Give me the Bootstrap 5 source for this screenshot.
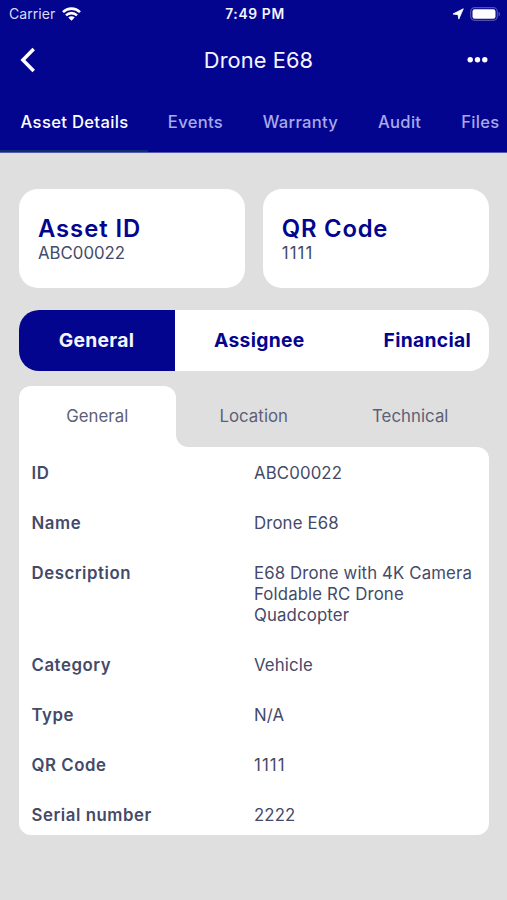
<!DOCTYPE html>
<html lang="en">
<head>
<meta charset="utf-8">
<meta name="viewport" content="width=device-width, initial-scale=1">
<title>Drone E68</title>
<link href="https://cdn.jsdelivr.net/npm/bootstrap@5.3.0/dist/css/bootstrap.min.css" rel="stylesheet">
<style>
body{font-family:Inter,"Liberation Sans",sans-serif;background:#dfdfdf;color:#444a68;min-height:900px;font-size:16.8px;line-height:21px;overflow:hidden}
.app-head{background:#04058f;height:153px;color:#f4f5ff;border-bottom:1px solid #5558b0}
.status{height:27px;padding:0 6px 0 9px;font-size:14px;letter-spacing:.05px;color:#dcdcf6}
.status>div{flex:1 1 0}
.clock{font-weight:600;font-size:13.8px;letter-spacing:.65px;color:#f4f5ff;padding-top:1px}
.title-bar{height:66px;padding:0 18px 0 20px}
.title-bar h1{font-size:21.8px;font-weight:400;letter-spacing:.1px;padding-left:8px}
.main-tabs{height:59px;font-size:16.6px;font-weight:500;letter-spacing:.28px}
.main-tabs a{color:#a6a9ea;padding:0 19.9px 0 20px;line-height:58px;white-space:nowrap;text-decoration:none}
.main-tabs a.active{color:#fff;border-bottom:2px solid #07306c;padding:0 19.4px 0 20.6px;letter-spacing:.33px}
.page{padding:36px 18.5px 0 19px}
.info{border-radius:19px;height:99px;padding:26px 19px 0}
.info h2{font-size:23.8px;line-height:28px;font-weight:600;color:#04058f;letter-spacing:.95px}
.info:nth-child(2) h2{letter-spacing:.8px}
.ones{letter-spacing:1.05px!important}
.segments{height:61px;border-radius:20px;margin-top:22px;font-size:19.3px;font-weight:650;color:#04058f;letter-spacing:.3px}
.seg-on{background:#04058f;color:#f4f5ff;width:156px;padding-right:1px}
.sub-tabs{height:61px;margin-top:15px;font-size:16.8px;letter-spacing:.05px;color:#5b5f78}
.sub-tabs>div{width:156.5px}
.sub-on{border-radius:12px 12px 0 0;background:#fff;position:relative}
.sub-on::after{content:"";position:absolute;left:100%;bottom:0;width:12px;height:12px;background:radial-gradient(circle at 100% 0,transparent 11.5px,#fff 12.3px)}
.panel{border-radius:0 12px 12px 12px;padding:16px 12.5px 9px;gap:29px;height:388px}
.panel dt{width:222.5px;font-weight:600;letter-spacing:.55px}
.panel dd{letter-spacing:.13px;white-space:nowrap}
</style>
</head>
<body>
<header class="app-head">
  <div class="status d-flex align-items-center">
    <div class="d-flex align-items-center gap-1">Carrier
      <svg style="margin-left:3px" width="19" height="14" viewBox="0 0 19 14" fill="none" stroke="#fff" stroke-width="2.6"><path d="M1 5.1a12.2 12.2 0 0 1 17 0M4 8.4a7.9 7.9 0 0 1 11 0"/><path d="M6.3 10.6a4.6 4.6 0 0 1 6.4 0L9.5 13.8z" fill="#fff" stroke="none"/></svg>
    </div>
    <div class="clock text-center">7:49 PM</div>
    <div class="d-flex align-items-center justify-content-end">
      <svg width="12" height="12" viewBox="0 0 12 12" fill="#fff"><path d="M11.3.8 6.8 11.1 6.1 6.7 1 6z" stroke="#fff" stroke-width=".8" stroke-linejoin="round"/></svg>
      <svg style="margin-left:6px" width="31" height="14" viewBox="0 0 31 14"><rect x=".7" y=".7" width="26.6" height="12.6" rx="4" fill="none" stroke="#5052ae" stroke-width="1.2"/><rect x="2.5" y="2.3" width="23" height="9.4" rx="2.2" fill="#fff"/><path d="M28.6 4.7c2 .9 2 3.7 0 4.6z" fill="#5052ae"/></svg>
    </div>
  </div>
  <div class="title-bar d-flex align-items-center justify-content-between">
    <svg width="22" height="26" viewBox="0 0 22 26" fill="none" stroke="#fff" stroke-width="3.5"><path d="M13.7 2 2.9 13l10.8 11"/></svg>
    <h1 class="mb-0">Drone E68</h1>
    <svg width="22" height="8" viewBox="0 0 22 8" fill="#fff"><circle cx="3.2" cy="3.7" r="2.7"/><circle cx="10.5" cy="3.7" r="2.7"/><circle cx="17.8" cy="3.7" r="2.7"/></svg>
  </div>
  <nav class="main-tabs d-flex">
    <a class="active" href="#">Asset Details</a><a href="#">Events</a><a href="#">Warranty</a><a href="#">Audit</a><a href="#">Files</a>
  </nav>
</header>
<main class="page">
  <div class="d-flex" style="gap:18px">
    <section class="info bg-white flex-fill w-50"><h2 class="mb-0">Asset ID</h2><div>ABC00022</div></section>
    <section class="info bg-white flex-fill w-50"><h2 class="mb-0">QR Code</h2><div class="ones">1111</div></section>
  </div>
  <div class="segments bg-white d-flex align-items-center overflow-hidden">
    <div class="seg-on h-100 d-flex align-items-center justify-content-center">General</div>
    <div class="flex-fill d-flex justify-content-between" style="padding:0 17.5px 0 39px"><span>Assignee</span><span>Financial</span></div>
  </div>
  <div class="sub-tabs d-flex text-center align-items-center">
    <div class="sub-on h-100 d-flex align-items-center justify-content-center">General</div><div>Location</div><div>Technical</div>
  </div>
  <dl class="panel bg-white d-flex flex-column mb-0">
    <div class="d-flex"><dt>ID</dt><dd class="mb-0">ABC00022</dd></div>
    <div class="d-flex"><dt>Name</dt><dd class="mb-0">Drone E68</dd></div>
    <div class="d-flex"><dt>Description</dt><dd class="mb-0">E68 Drone with 4K Camera<br>Foldable RC Drone<br>Quadcopter</dd></div>
    <div class="d-flex"><dt>Category</dt><dd class="mb-0">Vehicle</dd></div>
    <div class="d-flex"><dt>Type</dt><dd class="mb-0">N/A</dd></div>
    <div class="d-flex"><dt>QR Code</dt><dd class="mb-0 ones">1111</dd></div>
    <div class="d-flex"><dt>Serial number</dt><dd class="mb-0">2222</dd></div>
  </dl>
</main>
<script src="https://cdn.jsdelivr.net/npm/bootstrap@5.3.0/dist/js/bootstrap.bundle.min.js"></script>
</body>
</html>
